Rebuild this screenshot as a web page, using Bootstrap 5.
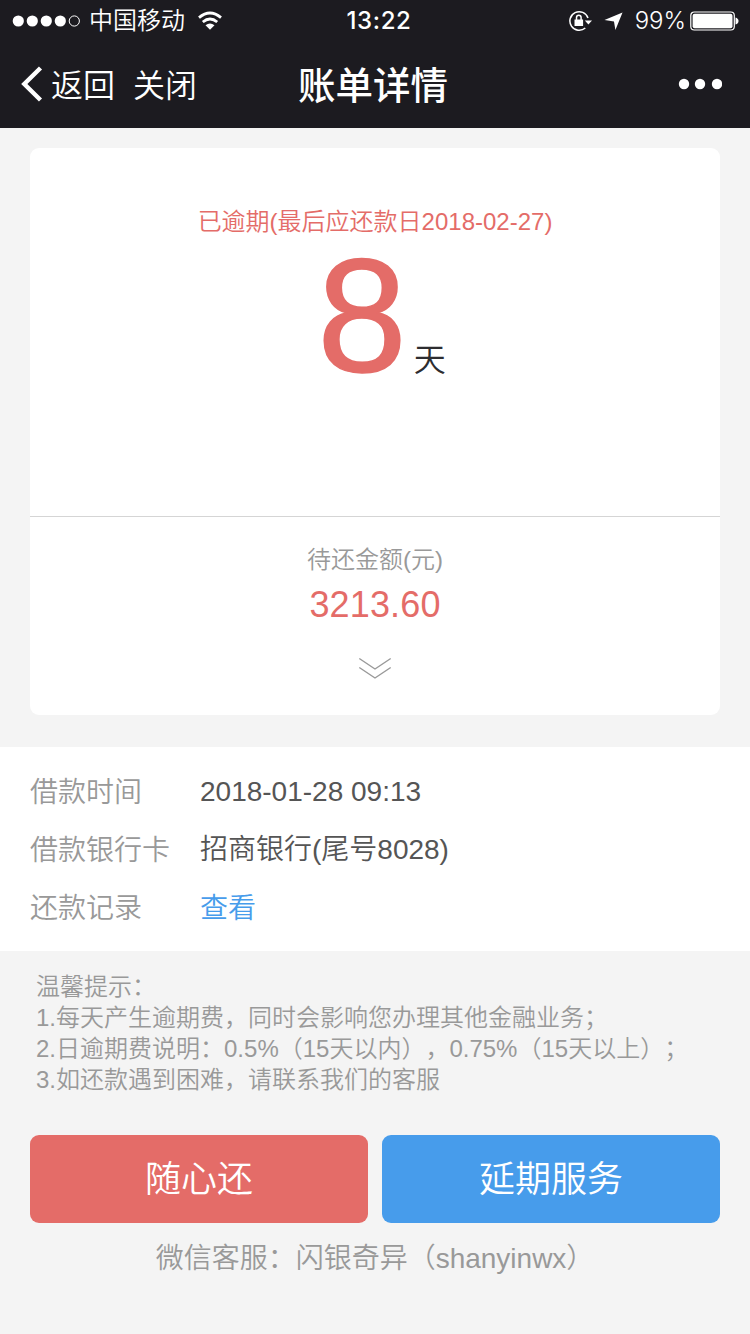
<!DOCTYPE html>
<html lang="zh-CN">
<head>
<meta charset="utf-8">
<meta name="viewport" content="width=device-width, initial-scale=1">
<title>账单详情</title>
<link href="https://cdn.jsdelivr.net/npm/bootstrap@5.3.0/dist/css/bootstrap.min.css" rel="stylesheet">
<style>
  body { background: #f4f4f4; font-family: "Liberation Sans", "Noto Sans CJK SC", sans-serif; font-weight: 350; text-spacing-trim: space-all; color: #555; }
  svg { display: block; flex: none; }
  .topbar { background: #1c1b20; color: #fff; height: 128px; }
  .status { height: 40px; padding: 1px 11px 0 12px; font-size: 24px; line-height: 40px; }
  .carrier { padding-top: 1px; margin-left: 8px; margin-right: 12px; }
  .sf { font-family: Inter, "Liberation Sans", sans-serif; }
  .side { flex: 1 1 0; }
  .clock { font-weight: 500; letter-spacing: .6px; padding-left: 7px; }
  .titlebar { height: 88px; padding: 0 28px 0 21px; font-size: 32px; line-height: 88px; }
  .titlebar a { padding-top: 3px; }
  .close-link { margin-left: 18px; }
  .page-title { font-size: 37.5px; font-weight: 500; padding: 3px 0 0 3px; }
  .plain-link { color: inherit; text-decoration: none; }
  .bill { margin: 20px 30px 0; height: 567px; border: 0; border-radius: 9px; }
  .bill-top { height: 369px; padding-top: 56px; border-bottom: 1px solid #d5d5d5; }
  .red { color: #e46c68; }
  .due { font-size: 24px; line-height: 36px; }
  .days { font-size: 161px; line-height: 140px; margin-top: 5px; margin-left: 13px; color: #2d2d30; }
  .days .red { -webkit-text-stroke: 1.5px #e46c68; }
  .days small { font-size: 32px; line-height: 1; margin-left: 7px; }
  .label24 { font-size: 24px; line-height: 36px; color: #999; margin-top: 25px; }
  .amount { font-size: 36px; line-height: 54px; letter-spacing: .15px; }
  .chevrons { margin-top: 25px; }
  .info { margin-top: 32px; height: 204px; padding: 16px 30px; font-size: 28px; line-height: 58px; }
  .info dt { width: 170px; font-weight: 350; color: #999; padding-top: 1px; margin-bottom: -1px; }
  .blue { color: #479ceb; display: block; padding-top: 1px; }
  .notes { margin: 20px 36px 0; font-size: 24px; line-height: 31px; color: #999; }
  .actions { margin: 40px 30px 0; gap: 14px; }
  .act { flex: 1 1 0; height: 88px; padding: 2px 0 0; border: 0; border-radius: 9px; font-size: 36px; line-height: 84px; font-weight: 350; color: #fff; }
  .act-red { background: #e46c68; }
  .act-blue { background: #479ceb; }
  .service { margin-top: 15px; font-size: 28px; line-height: 42px; color: #999; }
</style>
</head>
<body>
<header class="topbar">
  <div class="status d-flex align-items-center">
    <div class="side d-flex align-items-center">
      <svg width="69" height="12" viewBox="0 0 69 12" fill="#fff"><circle cx="6.300" cy="6" r="5.600"/><circle cx="20.300" cy="6" r="5.600"/><circle cx="34.300" cy="6" r="5.600"/><circle cx="48.300" cy="6" r="5.600"/><circle cx="62.300" cy="6" r="5.100" fill="none" stroke="#fff"/></svg>
      <span class="carrier">中国移动</span>
      <svg width="26" height="20" viewBox="0 0 26 20" fill="none" stroke="#fff" stroke-width="2.800"><path d="M2 6.600Q13-2.600 24 6.600M5.800 11Q13 5 20.200 11"/><path d="M8.500 14.200Q13 10.700 17.500 14.200L13 18.800z" fill="#fff" stroke="none"/></svg>
    </div>
    <span class="sf clock">13:22</span>
    <div class="side d-flex align-items-center justify-content-end">
      <svg width="24" height="22" viewBox="0 0 24 22"><path d="M20 8A9.300 9.300 0 1 0 17.300 18" fill="none" stroke="#fff" stroke-width="1.500"/><path d="M16.800 10.500H24L20.400 14.500z" fill="#fff"/><path d="M6.500 9.500h8.600V16H6.500z" fill="#fff"/><path d="M8.500 10V7.500a2.300 2.300 0 0 1 4.600 0V10" fill="none" stroke="#fff" stroke-width="1.500"/></svg>
      <svg class="ms-2 ps-1 me-2" width="23" height="20" viewBox="0 0 20 20"><path d="M19.500 1L12 19.500L10.500 10.500L.5 9z" fill="#fff"/></svg>
      <span class="sf ps-1">99%</span>
      <svg class="ms-1" width="49" height="20" viewBox="1 0 49 20"><rect x="1.800" y="1" width="43.500" height="18" rx="3.500" fill="none" stroke="#fff" stroke-width="1.200"/><rect x="3.600" y="2.800" width="39.900" height="14.400" rx="2" fill="#fff"/><path d="M46.500 6.500q3 1 3 3.500t-3 3.500z" fill="#fff"/></svg>
    </div>
  </div>
  <nav class="titlebar d-flex align-items-center">
    <div class="side d-flex align-items-center">
      <svg width="22" height="36" viewBox="0 0 22 36"><path d="M19.500 2L3.300 18L19.500 34" fill="none" stroke="#fff" stroke-width="4.400"/></svg>
      <a class="plain-link ms-2" href="#">返回</a>
      <a class="plain-link close-link" href="#">关闭</a>
    </div>
    <span class="page-title">账单详情</span>
    <div class="side d-flex justify-content-end">
      <svg width="44" height="12" viewBox="0 0 44 12" fill="#fff"><circle cx="6" cy="6" r="5.200"/><circle cx="22" cy="6" r="5.200"/><circle cx="39" cy="6" r="5.200"/></svg>
    </div>
  </nav>
</header>
<main>
  <section class="card bill text-center">
    <div class="bill-top">
      <div class="due red">已逾期(最后应还款日2018-02-27)</div>
      <div class="days"><span class="red">8</span><small>天</small></div>
    </div>
    <div class="label24">待还金额(元)</div>
    <div class="amount red">3213.60</div>
    <svg class="chevrons mx-auto" width="34" height="24" viewBox="0 0 34 24" fill="none" stroke="#999" stroke-width="1.400"><path d="M1.300 1.500L17 12L32.700 1.500M1.300 10.500L17 21L32.700 10.500"/></svg>
  </section>
  <dl class="info bg-white mb-0">
    <div class="d-flex"><dt>借款时间</dt><dd class="mb-0">2018-01-28 09:13</dd></div>
    <div class="d-flex"><dt>借款银行卡</dt><dd class="mb-0">招商银行(尾号8028)</dd></div>
    <div class="d-flex"><dt>还款记录</dt><dd class="mb-0"><a class="plain-link blue" href="#">查看</a></dd></div>
  </dl>
  <div class="notes">
    <div>温馨提示：</div>
    <div>1.每天产生逾期费，同时会影响您办理其他金融业务；</div>
    <div>2.日逾期费说明：0.5%（15天以内），0.75%（15天以上）；</div>
    <div>3.如还款遇到困难，请联系我们的客服</div>
  </div>
  <div class="actions d-flex">
    <button type="button" class="btn act act-red">随心还</button>
    <button type="button" class="btn act act-blue">延期服务</button>
  </div>
  <p class="service text-center mb-0">微信客服：闪银奇异（shanyinwx）</p>
</main>
<script src="https://cdn.jsdelivr.net/npm/bootstrap@5.3.0/dist/js/bootstrap.bundle.min.js"></script>
</body>
</html>
